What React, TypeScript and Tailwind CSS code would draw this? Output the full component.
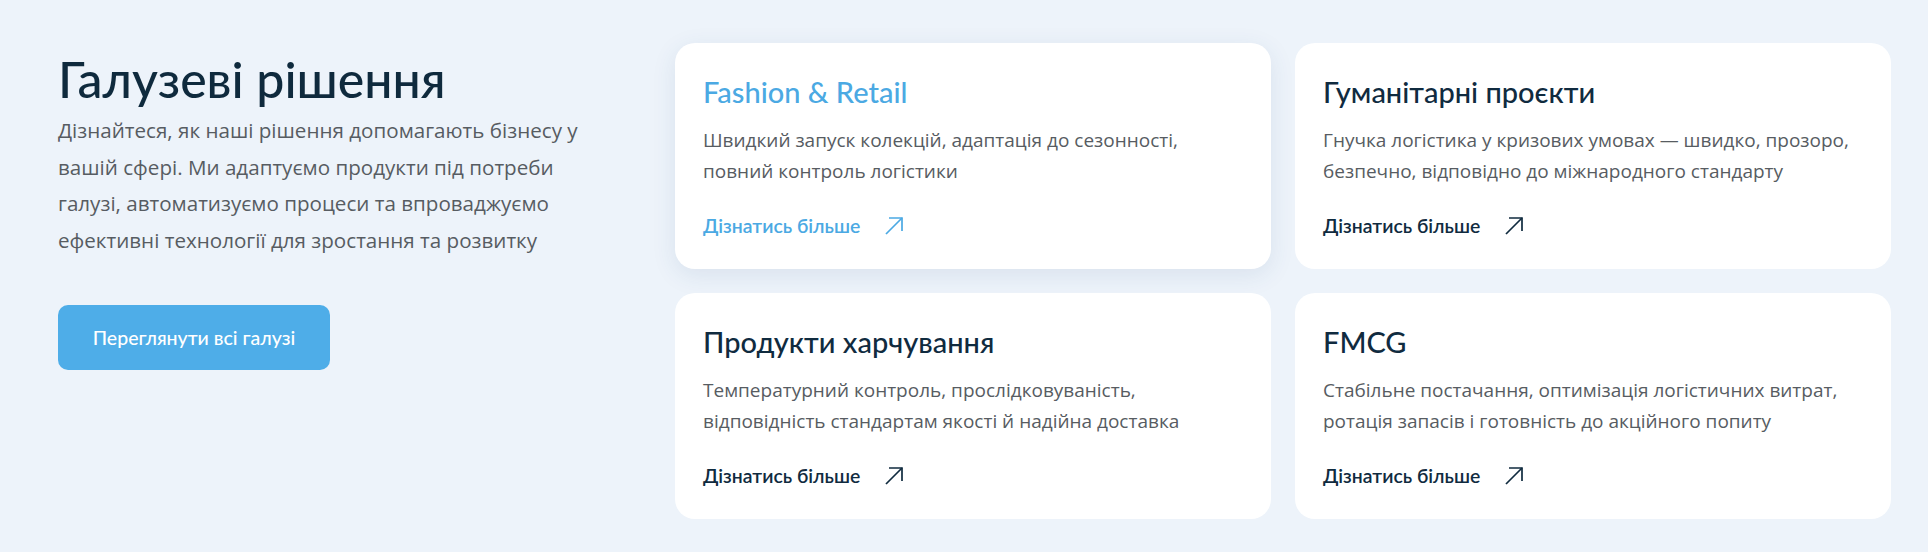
interface CardProps {
  title: string;
  text: string;
  active?: boolean;
}

const cards: CardProps[] = [
  {
    title: "Fashion & Retail",
    text: "Швидкий запуск колекцій, адаптація до сезонності, повний контроль логістики",
    active: true,
  },
  {
    title: "Гуманітарні проєкти",
    text: "Гнучка логістика у кризових умовах — швидко, прозоро, безпечно, відповідно до міжнародного стандарту",
  },
  {
    title: "Продукти харчування",
    text: "Температурний контроль, прослідковуваність, відповідність стандартам якості й надійна доставка",
  },
  {
    title: "FMCG",
    text: "Стабільне постачання, оптимізація логістичних витрат, ротація запасів і готовність до акційного попиту",
  },
];

function Arrow() {
  return (
    <svg width="20" height="20" viewBox="0 0 20 20" fill="none" stroke="currentColor" strokeWidth="1.7">
      <path d="M2 18 L18 2" />
      <path d="M5 2 H18 V15" />
    </svg>
  );
}

function Card({ title, text, active }: CardProps) {
  return (
    <div
      className={
        active
          ? "flex flex-col rounded-[20px] bg-white px-7 pt-[31px] pb-[31px] shadow-[0_6px_24px_rgba(40,80,130,0.10)]"
          : "flex flex-col rounded-[20px] bg-white px-7 pt-[31px] pb-[31px]"
      }
    >
      <h3
        className={
          active
            ? "font-['Lato',sans-serif] text-[29px] leading-[36px] font-medium text-[#4ba9e3]"
            : "font-['Lato',sans-serif] text-[29px] leading-[36px] font-medium text-[#102b3f]"
        }
      >
        {title}
      </h3>
      <p className="mt-[15px] font-['Open_Sans',sans-serif] text-[19px] leading-[30.5px] text-[#575c62]">
        {text}
      </p>
      <a
        href="#"
        className={
          active
            ? "mt-[28px] flex items-center gap-[24px] font-['Lato',sans-serif] text-[19.4px] leading-[24px] font-semibold text-[#4ba9e3]"
            : "mt-[28px] flex items-center gap-[24px] font-['Lato',sans-serif] text-[19.4px] leading-[24px] font-semibold text-[#102b3f]"
        }
      >
        Дізнатись більше
        <Arrow />
      </a>
    </div>
  );
}

export default function App() {
  return (
    <div className="min-h-screen bg-[#edf3fa] pt-[43px] pl-[58px] pr-[37px] pb-[33px] flex">
      <div className="w-[560px] shrink-0 mr-[57px] flex flex-col items-start pt-[7px]">
        <h2 className="font-['Lato',sans-serif] text-[50px] leading-[58px] font-medium text-[#0f2a3d]">
          Галузеві рішення
        </h2>
        <p className="mt-[4px] w-[555px] font-['Open_Sans',sans-serif] text-[20.6px] leading-[36.5px] text-[#575c62]">
          Дізнайтеся, як наші рішення допомагають бізнесу у вашій сфері. Ми
          адаптуємо продукти під потреби галузі, автоматизуємо процеси та
          впроваджуємо ефективні технології для зростання та розвитку
        </p>
        <button className="mt-[47px] h-[65px] w-[272px] rounded-[10px] bg-[#4eade8] font-['Lato',sans-serif] text-[19.5px] font-medium text-white">
          Переглянути всі галузі
        </button>
      </div>
      <div className="flex-1 grid grid-cols-2 gap-6 content-start">
        {cards.map((c) => (
          <Card key={c.title} {...c} />
        ))}
      </div>
    </div>
  );
}
